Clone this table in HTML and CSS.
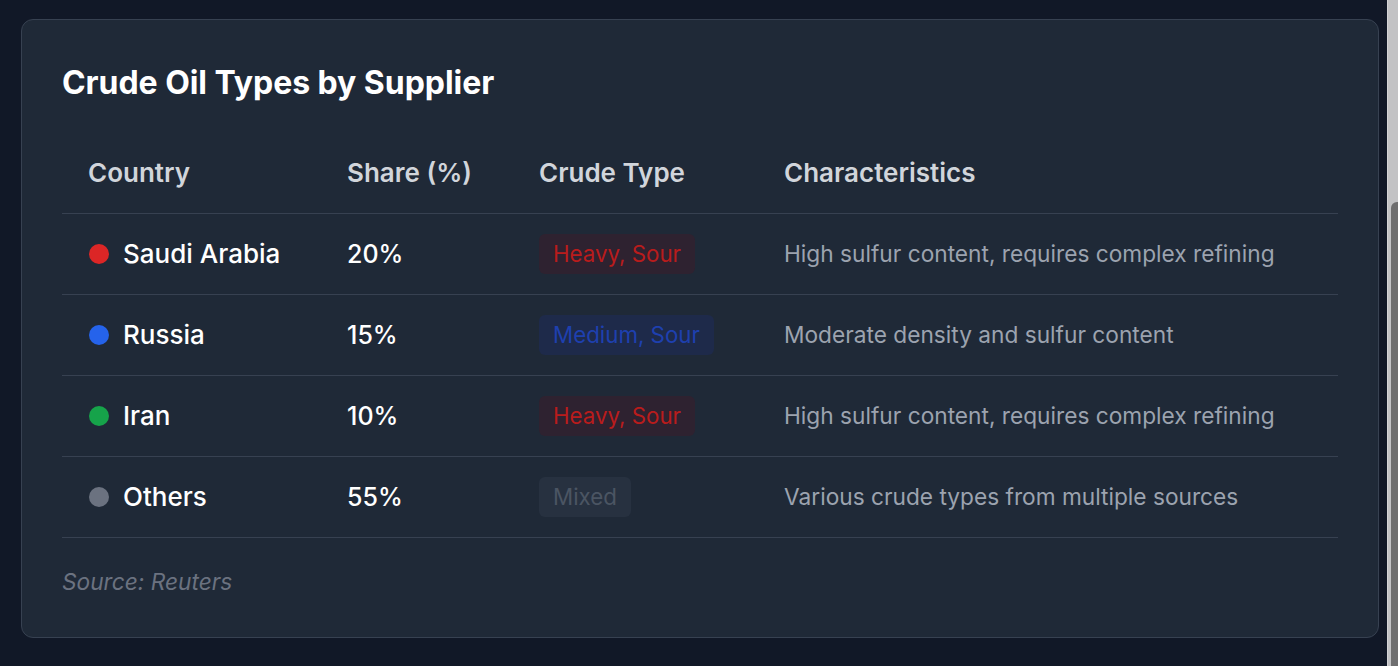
FILE: index.html
```html
<!DOCTYPE html>
<html lang="en">
<head>
<meta charset="utf-8">
<title>Crude Oil Types by Supplier</title>
<link rel="stylesheet" href="styles.css">
</head>
<body>
<main class="page">
  <section class="card">
    <h1 class="title">Crude Oil Types by Supplier</h1>
    <table class="table">
      <colgroup>
        <col class="c1"><col class="c2"><col class="c3"><col class="c4">
      </colgroup>
      <thead>
        <tr><th class="th-wide">Country</th><th class="th-wide">Share (%)</th><th>Crude Type</th><th>Characteristics</th></tr>
      </thead>
      <tbody>
        <tr>
          <td><span class="country"><span class="dot red"></span>Saudi Arabia</span></td>
          <td class="share">20%</td>
          <td><span class="badge b-red">Heavy, Sour</span></td>
          <td class="desc">High sulfur content, requires complex refining</td>
        </tr>
        <tr>
          <td><span class="country"><span class="dot blue"></span>Russia</span></td>
          <td class="share">15%</td>
          <td><span class="badge b-blue">Medium, Sour</span></td>
          <td class="desc">Moderate density and sulfur content</td>
        </tr>
        <tr>
          <td><span class="country"><span class="dot green"></span>Iran</span></td>
          <td class="share">10%</td>
          <td><span class="badge b-red">Heavy, Sour</span></td>
          <td class="desc">High sulfur content, requires complex refining</td>
        </tr>
        <tr>
          <td><span class="country"><span class="dot gray"></span>Others</span></td>
          <td class="share">55%</td>
          <td><span class="badge b-gray">Mixed</span></td>
          <td class="desc">Various crude types from multiple sources</td>
        </tr>
      </tbody>
    </table>
    <p class="source">Source: Reuters</p>
  </section>
</main>
<div class="scrollbar" aria-hidden="true">
  <div class="thumb"></div>
</div>
</body>
</html>
```

FILE: styles.css
```css
html {
  background: #111827;
}
body {
  margin: 0;
  height: 666px;
  overflow: hidden;
  display: flex;
  background: #111827;
  font-family: Inter, "Noto Sans", "Liberation Sans", sans-serif;
  color: #f9fafb;
}
.page {
  flex: 1;
  min-width: 0;
  padding: 19px 8px 0 21px;
}
.scrollbar {
  width: 11px;
  flex: none;
  background: #c2c2c4;
  border-left: 1px solid #d4d4d6;
  display: flex;
  flex-direction: column;
  padding-top: 202px;
  padding-left: 3px;
  box-sizing: border-box;
}
.thumb {
  flex: 1;
  background: #6e6e6f;
  border-top-left-radius: 6px;
}
.card {
  background: #1f2937;
  border: 1px solid #374151;
  border-radius: 12px;
  padding: 40px 40px 41px;
}
.title {
  margin: 0 0 27px;
  font-size: 32px;
  line-height: 46px;
  font-weight: 700;
  color: #ffffff;
  letter-spacing: -0.05px;
}
.table {
  width: 100%;
  border-collapse: collapse;
  table-layout: fixed;
}
.c1 { width: 259px; }
.c2 { width: 194px; }
.c3 { width: 245px; }
.table th {
  text-align: left;
  font-size: 26px;
  line-height: 32px;
  font-weight: 600;
  color: #d1d5db;
  padding: 24px;
  border-bottom: 1px solid #374151;
}
.table th.th-wide {
  padding-left: 26px;
}
.table td {
  padding: 20px 24px;
  font-size: 26px;
  line-height: 40px;
  height: 40px;
  border-bottom: 1px solid #374151;
  vertical-align: middle;
}
.country {
  display: flex;
  align-items: center;
  gap: 14px;
  font-weight: 500;
  color: #ffffff;
  padding-left: 3px;
}
.dot {
  width: 20px;
  height: 20px;
  border-radius: 50%;
  flex: none;
}
.red { background: #dc2626; }
.blue { background: #2563eb; }
.green { background: #16a34a; }
.gray { background: #6b7280; }
.table td.share {
  color: #ffffff;
  font-weight: 500;
  font-size: 25px;
  padding-left: 26px;
}
.badge {
  display: block;
  width: fit-content;
  padding: 6px 14px;
  font-size: 22.3px;
  line-height: 28px;
  border-radius: 6px;
}
.b-red {
  background: #2e2230;
  color: #b91c1c;
}
.b-blue {
  background: #1e2a4a;
  color: #1e40af;
}
.b-gray {
  background: #273140;
  color: #4b5563;
}
.table td.desc {
  font-size: 22.7px;
  color: #9ca3af;
}
.source {
  margin: 30px 0 0;
  font-size: 22.7px;
  line-height: 28px;
  font-style: italic;
  color: #6b7280;
}
```
